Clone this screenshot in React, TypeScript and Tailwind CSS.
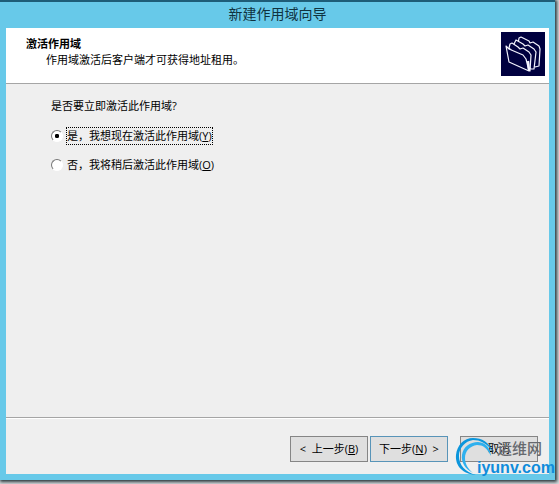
import { useState } from 'react'

type Choice = 'yes' | 'no'

const options: { id: Choice; label: string; accessKey: string }[] = [
  { id: 'yes', label: '是，我想现在激活此作用域', accessKey: 'Y' },
  { id: 'no', label: '否，我将稍后激活此作用域', accessKey: 'O' },
]

function FoldersIcon() {
  return (
    <svg viewBox="0 0 44 44" className="h-11 w-11 shrink-0 bg-[#00003f]" fill="#00003f" stroke="#f4f4ff" strokeWidth="1.2" strokeLinejoin="round" aria-hidden="true">
      <path d="M17 12 L18 6 L20 5 L28 9 L29 11 L32 10 L38 14 L39 17 L38 34 L34 35 Z" />
      <path d="M12 14 L14 10 L15 8 L22 12 L24 14 L27 13 L33 17 L35 20 L33 37 L30 37 Z" />
      <path d="M8 16 L9 12 L11 11 L17 15 L19 17 L22 16 L28 20 L30 23 L29 39 Z" />
      <path d="M5 14 L8 17 L22 23 L25 27 L28 39 L8 30 Z" />
      <path d="M27 29 L28 38" strokeWidth="2.4" />
    </svg>
  )
}

function Watermark() {
  return (
    <div className="pointer-events-none absolute right-0 bottom-0 h-11 w-[102px]" aria-hidden="true">
      <svg viewBox="0 0 50 44" className="absolute top-0 left-0 h-11 w-[50px]">
        <path d="M23 39 C10 38 2 30 3 19 C4 9 11 2 20 2 C29 2 36 6 40 16 C34 7 27 4 20 4 C12 5 6 12 6 20 C6 29 12 36 23 39 Z" fill="#0c96dc" />
        <path d="M20 37 C12 33 8 26 9 19 C10 11 17 6 25 6 C33 7 37 11 38 20 C34 12 30 9 24 9 C17 10 12 15 12 22 C12 28 15 33 20 37 Z" fill="#2fb0ee" />
      </svg>
      <span className="absolute top-0 left-11 text-[15px] leading-6 font-medium whitespace-nowrap text-[#66696e]">运维网</span>
      <span className="absolute top-5 left-6 font-['Liberation_Sans'] text-base leading-6 font-bold text-[#0f8cdb]">iyunv.com</span>
    </div>
  )
}

const buttonStyle = 'h-[26px] w-[78px] border bg-[#dfdfdf] text-center whitespace-pre'

export default function App() {
  const [choice, setChoice] = useState<Choice>('yes')

  return (
    <div className="flex min-h-screen bg-[#d5dadc] pr-1 pb-1 font-['Open_Sans','Noto_Sans_CJK_SC',sans-serif] text-[11px] leading-4 text-black">
      <div className="relative flex flex-1 flex-col border-t-2 border-[#1e5d78] bg-[#67c9e9] px-1.5 pb-1.5 shadow-[1px_1px_3px_1px_#2d3a3f]">
        <h1 className="h-[26px] text-center text-sm leading-6 text-[#10333f]">新建作用域向导</h1>

        <main className="flex flex-1 flex-col bg-[#efefef]">
          <header className="flex h-14 items-start justify-between border-b border-[#a5a5a5] bg-white pt-1 pr-1 pl-5">
            <div className="pt-1">
              <h2 className="font-bold">激活作用域</h2>
              <p className="pl-5">作用域激活后客户端才可获得地址租用。</p>
            </div>
            <FoldersIcon />
          </header>

          <div role="radiogroup" aria-labelledby="question" className="flex flex-1 flex-col items-start px-[45px] pt-3.5">
            <p id="question">是否要立即激活此作用域?</p>
            <div className="mt-[13px] flex flex-col items-start gap-[11px]">
              {options.map((option) => (
                <label key={option.id} className="flex items-center gap-[3px]">
                  <input
                    type="radio"
                    name="activate"
                    checked={choice === option.id}
                    onChange={() => setChoice(option.id)}
                    className="h-3 w-3 appearance-none rounded-full border border-t-[#777777] border-r-white border-b-white border-l-[#777777] bg-white checked:bg-radial checked:from-black checked:from-25% checked:to-white checked:to-35%"
                  />
                  <span className={choice === option.id ? 'border border-dotted border-black' : 'border border-transparent'}>
                    {option.label}(<u>{option.accessKey}</u>)
                  </span>
                </label>
              ))}
            </div>
          </div>

          <footer className="flex justify-end border-t border-[#a5a5a5] pt-[18px] pr-[11px] pb-3 inset-shadow-[0_1px_#ffffff]">
            <button type="button" className={`${buttonStyle} border-[#858585]`}>
              {'<  上一步('}<u>B</u>)
            </button>
            <button type="button" className={`${buttonStyle} ml-0.5 border-[#5894b8]`}>
              下一步(<u>N</u>{')  >'}
            </button>
            <button type="button" className={`${buttonStyle} ml-3 border-[#858585]`}>取消</button>
          </footer>
        </main>
        <Watermark />
      </div>
    </div>
  )
}
